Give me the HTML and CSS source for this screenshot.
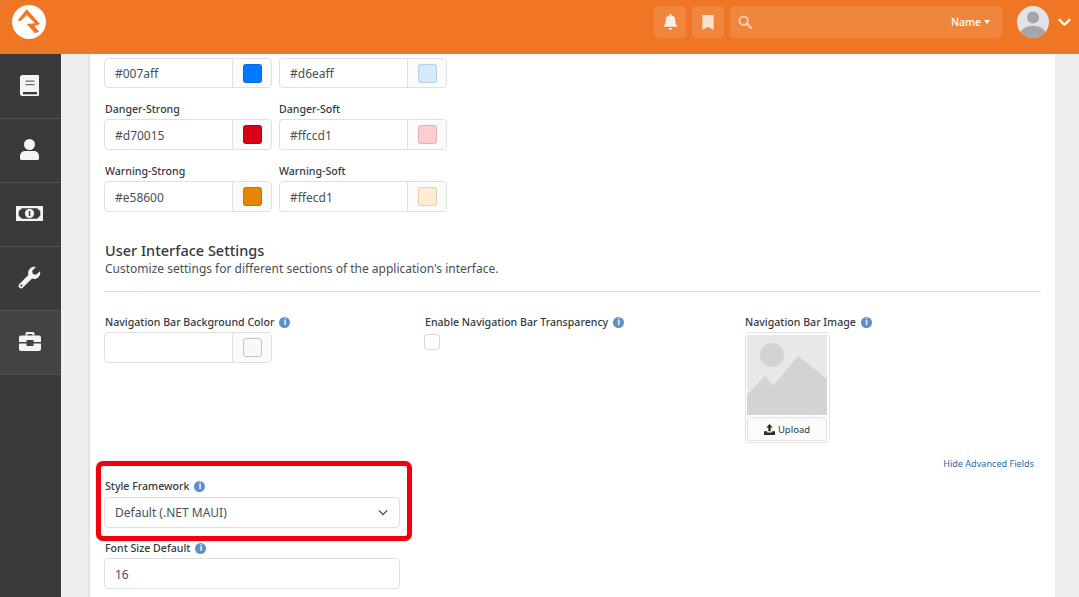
FILE: index.html
```html
<!DOCTYPE html>
<html lang="en">
<head>
<meta charset="utf-8">
<title>Theme settings</title>
<link rel="stylesheet" href="styles.css">
</head>
<body>
<div class="app">
  <header class="topbar">
    <div class="logo">
      <svg viewBox="0 0 34 34" width="34" height="34"><circle cx="17" cy="17" r="17" fill="#fff"/><path d="M5.300 15.700 14.700 4.300 28 19l-5.700 2 5 5.700-4.300 1.600L14.700 19l8.300-.7L14.700 10 9 15.700z" fill="#ee7624"/></svg>
    </div>
    <div class="top-actions">
      <button class="tile" aria-label="Notifications"><svg viewBox="0 0 14 16" width="15" height="16"><path d="M7 0a1 1 0 0 0-1 1v.6A4.800 4.800 0 0 0 2.200 6.400c0 3.600-1.300 4.600-2 5.400-.3.400 0 1 .5 1h12.600c.5 0 .8-.6.500-1-.7-.8-2-1.800-2-5.400A4.800 4.800 0 0 0 8 1.600V1a1 1 0 0 0-1-1zM5.200 14a1.800 1.800 0 0 0 3.600 0z" fill="#fff" opacity=".85"/></svg></button>
      <button class="tile" aria-label="Bookmarks"><svg viewBox="0 0 12 16" width="12" height="15"><path d="M0 1a1 1 0 0 1 1-1h10a1 1 0 0 1 1 1v15l-6-3.500L0 16z" fill="#fff" opacity=".75"/></svg></button>
      <div class="search">
        <svg viewBox="0 0 16 16" width="14" height="14"><circle cx="6.500" cy="6.500" r="4.800" fill="none" stroke="#fff" stroke-opacity=".55" stroke-width="2.400"/><path d="m10.500 10.500 4.200 4.200" stroke="#fff" stroke-opacity=".55" stroke-width="2.800" stroke-linecap="round"/></svg>
        <span class="search-scope">Name<i class="caret"></i></span>
      </div>
      <div class="avatar">
        <svg viewBox="0 0 32 32" width="32" height="32"><circle cx="16" cy="16" r="16" fill="#e1e3e6"/><circle cx="16" cy="11.500" r="6" fill="#a3a6ad"/><path d="M3.500 26a13 8.500 0 0 1 25 0A16 16 0 0 1 3.500 26z" fill="#a3a6ad"/></svg>
      </div>
      <svg class="chev" viewBox="0 0 14 10" width="13" height="9"><path d="m1.500 2 5.500 5.500L12.500 2" fill="none" stroke="#fff" stroke-width="2.600" stroke-linecap="round" stroke-linejoin="round"/></svg>
    </div>
  </header>
  <nav class="side">
    <a class="side-item"><svg viewBox="0 0 19 21" width="19" height="21"><path d="M2.500 0H18a1 1 0 0 1 1 1v19a1 1 0 0 1-1 1H2.500A2.500 2.500 0 0 1 0 18.500v-16A2.500 2.500 0 0 1 2.500 0z" fill="#f4f4f4"/><path d="M5.500 5.500h9v1.300h-9zM5.500 9h9v1.300h-9z" fill="#6a6a6a"/><path d="M3 17h14v2.300H3z" fill="#3a3a3a"/></svg></a>
    <a class="side-item"><svg viewBox="0 0 19 21" width="19" height="21"><circle cx="9.500" cy="5.500" r="5.500" fill="#f4f4f4"/><path d="M5 12h9a5 5 0 0 1 5 5v2.500a1.500 1.500 0 0 1-1.500 1.500h-16A1.500 1.500 0 0 1 0 19.500V17a5 5 0 0 1 5-5z" fill="#f4f4f4"/></svg></a>
    <a class="side-item"><svg viewBox="0 0 27 15" width="27" height="15"><path d="M0 0h27v15H0z" fill="#f4f4f4"/><path d="M6 2.300h15l3.300 3v4.400L21 12.700H6L2.700 9.700V5.300z" fill="#3a3a3a"/><circle cx="13.500" cy="7.500" r="4.600" fill="#f4f4f4"/><path d="M12.800 5h1.500v5h-1.500z" fill="#3a3a3a"/></svg></a>
    <a class="side-item"><svg viewBox="0 0 23 23" width="23" height="23"><path d="M22 5.200c.6 2.100 0 4.400-1.600 6-1.700 1.700-4.200 2.200-6.300 1.400L5 21.600a2.600 2.600 0 0 1-3.700-.1 2.600 2.600 0 0 1 .1-3.600l9-8.800c-.7-2.200-.2-4.700 1.500-6.400C13.500 1.100 15.800.5 17.900 1l-3.700 3.800.6 3.200 3.200.7z" fill="#f4f4f4"/><circle cx="3.400" cy="19.500" r="1.100" fill="#3a3a3a"/></svg></a>
    <a class="side-item active"><svg viewBox="0 0 22 19" width="22" height="19"><path d="M6.500 3.500V1.500A1.500 1.500 0 0 1 8 0h6a1.500 1.500 0 0 1 1.500 1.500v2h-2V2h-5v1.500z" fill="#f4f4f4"/><path d="M2 3.500h18A2 2 0 0 1 22 5.500V10h-7.500V8h-7v2H0V5.500A2 2 0 0 1 2 3.500zM0 11.500h7.500V14h7v-2.500H22V17a2 2 0 0 1-2 2H2a2 2 0 0 1-2-2z" fill="#f4f4f4"/></svg></a>
  </nav>
  <main class="main">
    <section class="card">
      <div class="color-rows">
        <div class="color-pair">
          <div class="field"><div class="input-group"><span class="value">#007aff</span><span class="addon"><i class="swatch sw-info"></i></span></div></div>
          <div class="field"><div class="input-group"><span class="value">#d6eaff</span><span class="addon"><i class="swatch sw-info-soft"></i></span></div></div>
        </div>
        <div class="color-pair">
          <div class="field"><label class="lbl">Danger-Strong</label><div class="input-group"><span class="value">#d70015</span><span class="addon"><i class="swatch sw-danger"></i></span></div></div>
          <div class="field"><label class="lbl">Danger-Soft</label><div class="input-group"><span class="value">#ffccd1</span><span class="addon"><i class="swatch sw-danger-soft"></i></span></div></div>
        </div>
        <div class="color-pair">
          <div class="field"><label class="lbl">Warning-Strong</label><div class="input-group"><span class="value">#e58600</span><span class="addon"><i class="swatch sw-warn"></i></span></div></div>
          <div class="field"><label class="lbl">Warning-Soft</label><div class="input-group"><span class="value">#ffecd1</span><span class="addon"><i class="swatch sw-warn-soft"></i></span></div></div>
        </div>
      </div>
      <h2 class="section-title">User Interface Settings</h2>
      <p class="section-sub">Customize settings for different sections of the application's interface.</p>
      <hr class="rule">
      <div class="three-col">
        <div>
          <label class="lbl">Navigation Bar Background Color <i class="info">i</i></label>
          <div class="input-group"><span class="value"></span><span class="addon"><i class="swatch sw-empty"></i></span></div>
        </div>
        <div>
          <label class="lbl">Enable Navigation Bar Transparency <i class="info">i</i></label>
          <span class="checkbox"></span>
        </div>
        <div>
          <label class="lbl">Navigation Bar Image <i class="info">i</i></label>
          <div class="upload">
            <svg class="placeholder" viewBox="0 0 80 80" width="80" height="80"><rect width="80" height="80" fill="#e8e8e8"/><circle cx="25" cy="20" r="12" fill="#d3d3d3"/><path d="M0 60 18 41l8 10 25-30 29 23v36H0z" fill="#d3d3d3"/></svg>
            <div class="upload-btn"><svg viewBox="0 0 12 12" width="11" height="11"><path d="M6 0 2.500 3.700h2.200V8h2.600V3.700h2.200zM0 8h3.500v1.300h5V8H12v4H0z" fill="#2c2c2c"/></svg>Upload</div>
          </div>
        </div>
      </div>
      <div class="adv-row"><a class="adv-link">Hide Advanced Fields</a></div>
      <div class="narrow">
        <label class="lbl lbl-select">Style Framework <i class="info">i</i></label>
        <div class="select">Default (.NET MAUI)<svg viewBox="0 0 12 8" width="10" height="7"><path d="m1 1.500 5 5 5-5" fill="none" stroke="#444" stroke-width="1.500"/></svg></div>
        <label class="lbl lbl-next">Font Size Default <i class="info">i</i></label>
        <div class="plain-input">16</div>
      </div>
    </section>
  </main>
</div>
<div class="callout"></div>
</body>
</html>
```

FILE: styles.css
```css
* { box-sizing: border-box; }
html, body { margin: 0; height: 100%; overflow: hidden; }
body { font-family: "Noto Sans", "Open Sans", sans-serif; color: #343a40; background: #efefef; position: relative; }
.app { display: grid; grid-template-columns: 61px 1fr; grid-template-rows: 54px 543px; height: 597px; }
.topbar { grid-column: 1 / 3; background: #ee7624; display: flex; align-items: flex-start; justify-content: space-between; }
.logo { margin: 5px 0 0 12px; height: 34px; }
.top-actions { display: flex; align-items: center; margin: 6px 8px 0 0; height: 32px; }
.tile { width: 32px; height: 32px; border: 0; padding: 0; margin-right: 6px; border-radius: 4px; background: rgba(255,255,255,.12); display: flex; align-items: center; justify-content: center; }
.search { width: 272px; height: 32px; border-radius: 4px; background: rgba(255,255,255,.12); display: flex; align-items: center; justify-content: space-between; padding: 0 12px 0 8px; margin-right: 15px; }
.search-scope { color: #fff; font-size: 10.500px; font-weight: 500; display: flex; align-items: center; }
.caret { width: 0; height: 0; border: 3.500px solid transparent; border-top: 4px solid #fff; border-bottom: 0; margin-left: 3px; }
.avatar { width: 32px; height: 32px; }
.chev { margin-left: 9px; }
.side { background: #3a3a3a; display: flex; flex-direction: column; padding-top: 1px; }
.side-item { height: 64px; padding: 0 2px 3px 0; display: flex; align-items: center; justify-content: center; border-bottom: 1px solid #525252; flex: none; }
.side-item.active { background: #434343; padding-bottom: 2px; }
.main { padding-left: 27px; padding-right: 24px; overflow: hidden; }
.card { background: #fff; border-left: 2px solid #e4e4e4; padding: 4px 14px 0 14px; height: 543px; width: 967px; }
.color-pair { display: flex; gap: 7px; margin-bottom: 15px; }
.field { width: 168px; }
.field + .field .lbl { padding-left: 0; }
.lbl { display: flex; align-items: center; gap: 3px; height: 12px; font-size: 10.600px; font-weight: 500; line-height: 12px; color: #343a40; margin-bottom: 4px; padding-left: 1px; white-space: nowrap; }
.input-group { display: flex; width: 168px; height: 31px; border: 1px solid #dfe0e1; border-radius: 4px; background: #fff; }
.color-pair:first-child .input-group { height: 30px; }
.color-pair:first-child .value { line-height: 29px; }
.value { flex: 1; font-size: 12px; line-height: 31px; padding-left: 10px; color: #495057; }
.addon { width: 39px; border-left: 1px solid #dfe0e1; background: #fbfbfb; border-radius: 0 4px 4px 0; display: flex; align-items: center; justify-content: center; }
.swatch { width: 19px; height: 19px; border-radius: 3px; border: 1px solid rgba(0,0,0,.12); display: block; }
.sw-info { background: #007aff; }
.sw-info-soft { background: #d6eaff; }
.sw-danger { background: #d70015; }
.sw-danger-soft { background: #ffccd1; }
.sw-warn { background: #e58600; }
.sw-warn-soft { background: #ffecd1; }
.sw-empty { background: #f8f8f8; border-color: #c4c4c4; }
.section-title { font-size: 14.500px; font-weight: 500; line-height: 18px; margin: 29px 0 0 1px; color: #343a40; }
.section-sub { font-size: 12px; line-height: 16px; margin: 2px 0 0 1px; color: #495057; }
.rule { border: 0; border-top: 1px solid #dcdcdc; margin: 14px 0 24px; }
.three-col { display: grid; grid-template-columns: repeat(3, 320px); height: 127px; }
.info { display: inline-flex; width: 11px; height: 11px; border-radius: 50%; background: #5d8fc9; color: #fff; font-size: 8px; font-style: normal; font-weight: 700; align-items: center; justify-content: center; margin-left: 2px; }
.checkbox { display: block; width: 16px; height: 16px; border: 1px solid #d8d8d8; border-radius: 3px; margin-top: 6px; }
.upload { width: 85px; height: 111px; border: 1px solid #e2e2e2; border-radius: 4px; padding: 2px 1px 1px; margin-left: 1px; }
.placeholder { display: block; }
.upload-btn { margin-top: 2px; height: 24px; width: 80px; padding-top: 1px; border: 1px solid #e2e2e2; border-radius: 3px; background: #fbfbfb; font-size: 9.500px; display: flex; align-items: center; justify-content: center; gap: 3px; color: #343a40; }
.adv-row { display: flex; justify-content: flex-end; height: 37px; padding: 14px 7px 0 0; }
.adv-link { font-size: 9.100px; line-height: 13px; color: #1a6fa8; }
.narrow { width: 296px; }
.lbl-select { margin-bottom: 5px; }
.select { height: 31px; border: 1px solid #dfe0e1; border-radius: 4px; display: flex; align-items: center; justify-content: space-between; padding: 0 11px 0 10px; font-size: 12px; color: #495057; }
.lbl-next { margin-top: 14px; }
.plain-input { height: 31px; border: 1px solid #dfe0e1; border-radius: 4px; font-size: 12px; line-height: 31px; padding-left: 10px; color: #495057; }
.callout { position: absolute; left: 96px; top: 461px; width: 316px; height: 80px; border: 5px solid #f20010; border-radius: 7px; box-shadow: 0 0 1px rgba(0,0,0,.5); }
```
